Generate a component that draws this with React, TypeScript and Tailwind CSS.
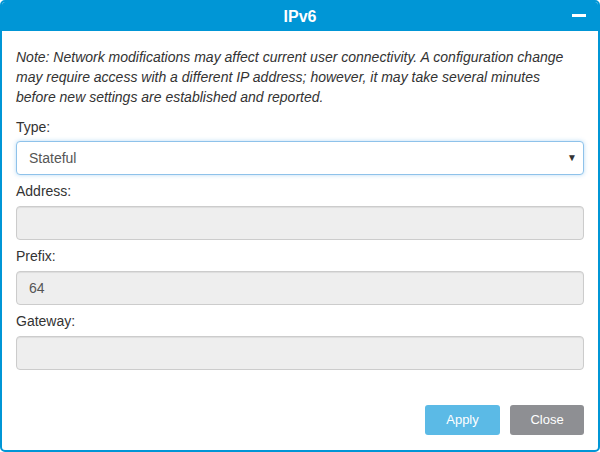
import { Minus } from 'lucide-react';

const font = { fontFamily: '"Liberation Sans", Arial, sans-serif' };

function Field({ label, value, last }: { label: string; value?: string; last?: boolean }) {
  return (
    <div className={last ? '' : 'mb-[6px]'}>
      <div className="mb-[5px] h-5 text-sm leading-5 text-[#333]">{label}</div>
      <div className="flex h-[34px] items-center rounded-[4px] border border-[#ccc] bg-[#eee] px-3 text-sm text-[#555] shadow-[inset_0_1px_1px_rgba(0,0,0,0.075)]">
        {value}
      </div>
    </div>
  );
}

export default function App() {
  return (
    <div className="h-[452px] w-[600px] bg-white" style={font}>
      <div className="flex h-full flex-col overflow-hidden rounded-[5px] border-2 border-[#0096d6] bg-white">
        <div className="relative flex h-[29px] items-center justify-center bg-[#0096d6]">
          <span className="text-base font-bold text-white">IPv6</span>
          <div className="absolute right-[12px] top-[12px] h-[3px] w-[14px] bg-white" />
        </div>

        <div className="flex flex-1 flex-col px-[14px] pt-4">
          <p className="pr-[12px] text-sm italic leading-5 text-[#333]">
            Note: Network modifications may affect current user connectivity. A configuration change may require access with a different IP address; however, it may take several minutes before new settings are established and reported.
          </p>

          <div className="mt-[10px] mb-[6px]">
            <div className="mb-1 h-5 text-sm leading-5 text-[#333]">Type:</div>
            <div className="flex h-[34px] items-center justify-between rounded-[4px] border border-[#8ec2ea] bg-white pl-3 pr-[6px] text-sm text-[#555] shadow-[0_0_4px_rgba(102,175,233,0.45)]">
              <span>Stateful</span>
              <span className="text-[10px] text-[#333]">▼</span>
            </div>
          </div>

          <Field label="Address:" />
          <Field label="Prefix:" value="64" />
          <Field label="Gateway:" last />

          <div className="mt-auto mb-[15px] flex justify-end gap-[10px]">
            <button className="h-[30px] w-[75px] rounded-[3px] bg-[#5bbae6] text-[13px] text-white">Apply</button>
            <button className="h-[30px] w-[74px] rounded-[3px] bg-[#8e8f93] text-[13px] text-white">Close</button>
          </div>
        </div>
      </div>
    </div>
  );
}
